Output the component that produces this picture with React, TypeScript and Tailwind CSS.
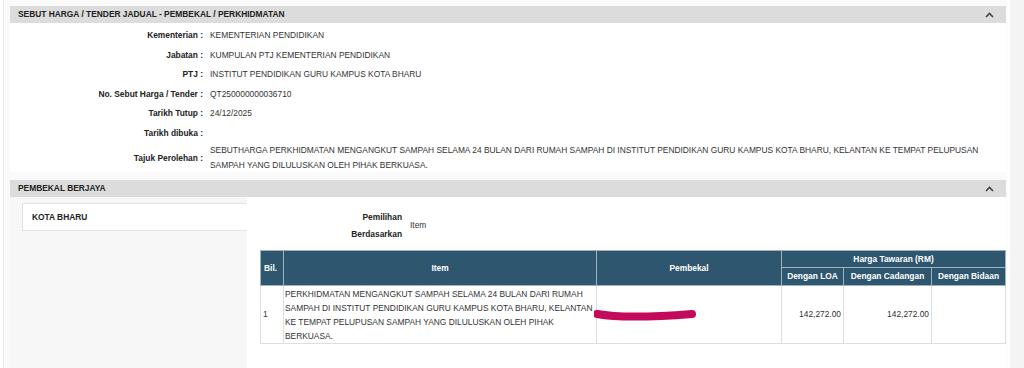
import React from "react";

function Chevron() {
  return (
    <svg width="9" height="6" viewBox="0 0 9 6" className="block">
      <polyline points="1,5 4.5,1.5 8,5" fill="none" stroke="#444" strokeWidth="1.6" />
    </svg>
  );
}

function SectionHeader({ title }: { title: string }) {
  return (
    <div className="h-[17px] bg-[#dcdcdc] flex items-center justify-between pl-[8px] pr-[12px] font-bold text-[#222]">
      <span>{title}</span>
      <Chevron />
    </div>
  );
}

const rows: [string, string][] = [
  ["Kementerian :", "KEMENTERIAN PENDIDIKAN"],
  ["Jabatan :", "KUMPULAN PTJ KEMENTERIAN PENDIDIKAN"],
  ["PTJ :", "INSTITUT PENDIDIKAN GURU KAMPUS KOTA BHARU"],
  ["No. Sebut Harga / Tender :", "QT250000000036710"],
  ["Tarikh Tutup :", "24/12/2025"],
  ["Tarikh dibuka :", ""],
];

export default function App() {
  return (
    <div className="w-[1024px] h-[368px] overflow-hidden bg-white flex font-['Liberation_Sans',Arial,sans-serif] text-[8.4px] text-[#333]">
      <div className="w-[3px] shrink-0" />
      <div className="w-[1004px] shrink-0 border-l border-[#ececec] bg-[#fafafa] pl-[6px] pt-[6px]">
        <div className="w-[996px]">
          <SectionHeader title="SEBUT HARGA / TENDER JADUAL - PEMBEKAL / PERKHIDMATAN" />
          <div className="bg-white pt-[3px] h-[149px] mb-[8px]">
            {rows.map(([l, v]) => (
              <div key={l} className="flex leading-[19.5px]">
                <div className="w-[193px] text-right font-bold text-[#222]">{l}</div>
                <div className="pl-[7px]">{v}</div>
              </div>
            ))}
            <div className="flex items-center">
              <div className="w-[193px] shrink-0 text-right font-bold text-[#222]">Tajuk Perolehan :</div>
              <div className="pl-[7px] pr-[12px] leading-[15px]">
                SEBUTHARGA PERKHIDMATAN MENGANGKUT SAMPAH SELAMA 24 BULAN DARI RUMAH SAMPAH DI INSTITUT PENDIDIKAN GURU KAMPUS KOTA BHARU, KELANTAN KE TEMPAT PELUPUSAN SAMPAH YANG DILULUSKAN OLEH PIHAK BERKUASA.
              </div>
            </div>
          </div>
          <SectionHeader title="PEMBEKAL BERJAYA" />
          <div className="flex h-[171px]">
            <div className="w-[237px] shrink-0 bg-[#f7f7f7] pl-[12px] pt-[6px]">
              <div className="bg-white border border-[#e3e3e3] border-r-0 h-[28px] flex items-center pl-[9px] font-bold text-[#222]">
                KOTA BHARU
              </div>
            </div>
            <div className="flex-1 bg-white">
              <div className="flex pt-[11.5px]">
                <div className="w-[155px] text-right font-bold text-[#222] leading-[17px]">
                  Pemilihan
                  <br />
                  Berdasarkan
                </div>
                <div className="pl-[8px] self-center">Item</div>
              </div>
              <table className="mt-[7.5px] ml-[13px] w-[745px] table-fixed border-collapse">
                <colgroup>
                  <col className="w-[23px]" />
                  <col className="w-[313px]" />
                  <col className="w-[185px]" />
                  <col className="w-[62px]" />
                  <col className="w-[88px]" />
                  <col className="w-[74px]" />
                </colgroup>
                <thead>
                  <tr className="h-[17px]">
                    <th rowSpan={2} className="bg-[#2e566f] text-white font-bold border border-[#9fb2be] text-left pl-[3px] p-0">Bil.</th>
                    <th rowSpan={2} className="bg-[#2e566f] text-white font-bold border border-[#9fb2be] text-center p-0">Item</th>
                    <th rowSpan={2} className="bg-[#2e566f] text-white font-bold border border-[#9fb2be] text-center p-0">Pembekal</th>
                    <th colSpan={3} className="bg-[#2e566f] text-white font-bold border border-[#9fb2be] text-center p-0">Harga Tawaran (RM)</th>
                  </tr>
                  <tr className="h-[18px]">
                    <th className="bg-[#2e566f] text-white font-bold border border-[#9fb2be] text-center p-0">Dengan LOA</th>
                    <th className="bg-[#2e566f] text-white font-bold border border-[#9fb2be] text-center p-0">Dengan Cadangan</th>
                    <th className="bg-[#2e566f] text-white font-bold border border-[#9fb2be] text-center p-0">Dengan Bidaan</th>
                  </tr>
                </thead>
                <tbody>
                  <tr className="h-[58px]">
                    <td className="border border-[#dedede] pl-[2px] align-middle">1</td>
                    <td className="border border-[#dedede] pl-[1px] pr-0 leading-[14px] align-middle">
                      PERKHIDMATAN MENGANGKUT SAMPAH SELAMA 24 BULAN DARI RUMAH SAMPAH DI INSTITUT PENDIDIKAN GURU KAMPUS KOTA BHARU, KELANTAN KE TEMPAT PELUPUSAN SAMPAH YANG DILULUSKAN OLEH PIHAK BERKUASA.
                    </td>
                    <td className="border border-[#dedede] p-0 align-middle">
                      <svg width="110" height="14" viewBox="0 0 110 14" className="block -ml-[3px]">
                        <path d="M3,6 C25,10 60,9 98,6" fill="none" stroke="#c40a5c" strokeWidth="8" strokeLinecap="round" />
                      </svg>
                    </td>
                    <td className="border border-[#dedede] text-right pr-[2px] align-middle">142,272.00</td>
                    <td className="border border-[#dedede] text-right pr-[2px] align-middle">142,272.00</td>
                    <td className="border border-[#dedede] align-middle"></td>
                  </tr>
                </tbody>
              </table>
            </div>
          </div>
        </div>
      </div>
      <div className="w-[3px] bg-white shrink-0" />
      <div className="flex-1 bg-[#f4f4f4]" />
    </div>
  );
}
